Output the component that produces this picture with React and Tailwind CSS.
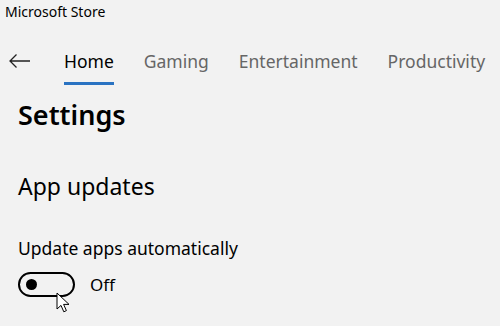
import { useState } from 'react';

const tabs = ['Home', 'Gaming', 'Entertainment', 'Productivity'];

export default function App() {
  const [auto, setAuto] = useState(false);
  return (
    <div className="w-[500px] h-[326px] overflow-hidden bg-[#f2f2f2] text-black" style={{ fontFamily: '"Noto Sans", "Open Sans", sans-serif' }}>
      {/* Title bar */}
      <div className="h-[30px] pl-[5px] pt-[2px] text-[14px] leading-[20px]">Microsoft Store</div>

      {/* Nav */}
      <div className="flex items-start h-[58px] pt-[20px]">
        <button className="w-[40px] h-[22px] flex items-center pl-[9px]">
          <svg width="21" height="14" viewBox="0 0 21 14" fill="none" stroke="#222" strokeWidth="1.3">
            <path d="M21 7H1M7.5 0.5L1 7l6.5 6.5" />
          </svg>
        </button>
        <div className="flex gap-[30px] ml-[24px]">
          {tabs.map((t, i) => (
            <div key={t} className="flex flex-col">
              <span className={`text-[17.5px] leading-[22px] ${i === 0 ? 'text-black' : 'text-[#666]'}`}>{t}</span>
              {i === 0 && <span className="mt-[10px] h-[3px] bg-[#2a73c2]" />}
            </div>
          ))}
        </div>
      </div>

      {/* Content */}
      <div className="pl-[18px] pt-[11px]">
        <h1 className="text-[27px] leading-[32px] font-semibold">Settings</h1>
        <h2 className="mt-[41px] text-[23px] leading-[28px]">App updates</h2>
        <p className="mt-[37px] text-[17.5px] leading-[22px]">Update apps automatically</p>
        <div className="mt-[13px] flex items-center gap-[15px] relative">
          <button
            onClick={() => setAuto(!auto)}
            className="w-[57px] h-[25px] rounded-full border-[2.5px] border-black flex items-center px-[6px]"
          >
            <span className="w-[11px] h-[11px] rounded-full bg-black" />
          </button>
          <span className="text-[17px] leading-[22px]">Off</span>
          <svg className="absolute left-[38px] top-[20px]" width="14" height="21" viewBox="0 0 14 21">
            <path d="M1 1v16l4-3.6 2.8 6.4 2.6-1.2-2.8-6.2H13z" fill="#fff" stroke="#000" strokeWidth="1" strokeLinejoin="round" />
          </svg>
        </div>
      </div>
    </div>
  );
}
